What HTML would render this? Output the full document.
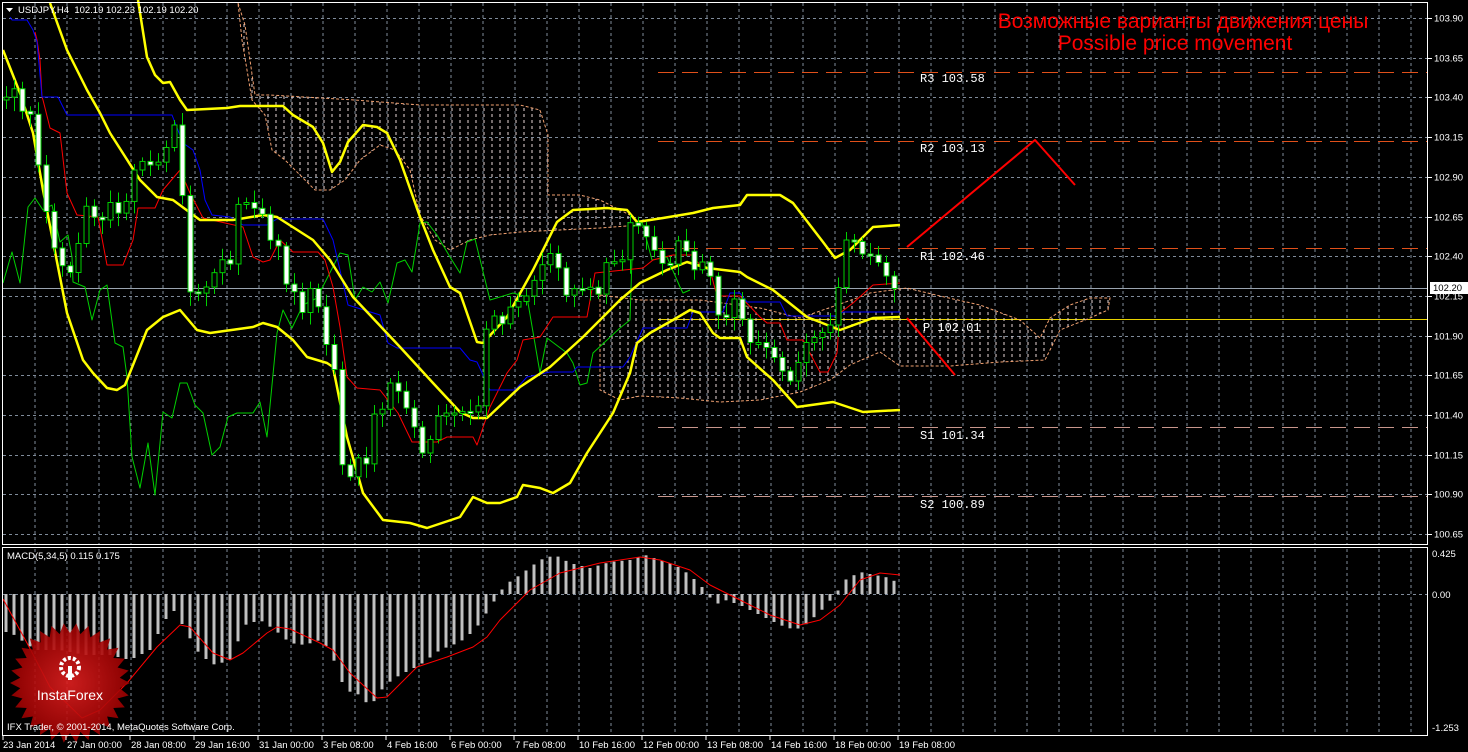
<!DOCTYPE html>
<html><head><meta charset="utf-8"><style>
html,body{margin:0;padding:0;background:#000;}
#c{position:relative;width:1468px;height:752px;overflow:hidden;background:#000;font-family:"Liberation Sans",sans-serif;}
svg{position:absolute;left:0;top:0;}
.ax{font-family:"Liberation Sans",sans-serif;font-size:9.5px;fill:#fff;}
.lv{font-family:"Liberation Mono",monospace;font-size:12px;fill:#fff;}
</style></head><body><div id="c">
<svg id="s" width="1468" height="752" xmlns="http://www.w3.org/2000/svg">
<g id="grid"></g>
<g id="cloud"></g>
<g id="lines"></g>
<g id="candles"></g>
<g id="macd"></g>
<g id="logo"></g>
<g id="txt">
<rect x="2.5" y="2.5" width="1425" height="542" fill="none" stroke="#fff"/>
<rect x="2.5" y="547.5" width="1425" height="188" fill="none" stroke="#fff"/>
<path d="M6 8 L13 8 L9.5 12 Z" fill="#fff"/>
<text x="18" y="13" class="ax" xml:space="preserve">USDJPY,H4  102.19 102.23 102.19 102.20</text>
<text x="7" y="559" class="ax">MACD(5,34,5) 0.115 0.175</text>
<text x="7" y="730" class="ax">IFX Trader, © 2001-2014, MetaQuotes Software Corp.</text>
<text x="1183" y="28" text-anchor="middle" font-family="Liberation Sans, sans-serif" font-size="21" fill="#ff0000">Возможные варианты движения цены</text>
<text x="1175" y="50" text-anchor="middle" font-family="Liberation Sans, sans-serif" font-size="21" fill="#ff0000">Possible price movement</text>
<text x="920" y="82" class="lv">R3 103.58</text>
<text x="920" y="152" class="lv">R2 103.13</text>
<text x="920" y="260" class="lv">R1 102.46</text>
<text x="923" y="331" class="lv">P 102.01</text>
<text x="920" y="439" class="lv">S1 101.34</text>
<text x="920" y="508" class="lv">S2 100.89</text>
</g>
<g id="axis"></g>
</svg>
</div>
<script>
const NS="http://www.w3.org/2000/svg";
function el(g,tag,a,txt){const e=document.createElementNS(NS,tag);for(const k in a)e.setAttribute(k,a[k]);if(txt!==undefined)e.textContent=txt;document.getElementById(g).appendChild(e);return e;}
function pl(g,pts,col,w,extra){const a={points:pts.map(p=>p.join(',')).join(' '),fill:'none',stroke:col,'stroke-width':w,'stroke-linejoin':'round'};Object.assign(a,extra||{});return el(g,'polyline',a);}
function interp(pts,x){if(x<=pts[0][0])return pts[0][1];for(let i=1;i<pts.length;i++){if(x<=pts[i][0]){const a=pts[i-1],b=pts[i];return a[1]+(b[1]-a[1])*(x-a[0])/(b[0]-a[0]);}}return pts[pts.length-1][1];}
for(let x=35;x<1428;x+=32){el('grid','line',{x1:x,y1:3,x2:x,y2:545,stroke:'#7f8b9a','stroke-dasharray':'3,3','stroke-width':1});el('grid','line',{x1:x,y1:549,x2:x,y2:735,stroke:'#7f8b9a','stroke-dasharray':'3,3','stroke-width':1});}
const prices=["103.90","103.65","103.40","103.15","102.90","102.65","102.40","102.15","101.90","101.65","101.40","101.15","100.90","100.65"];
prices.forEach((p,i)=>{const y=Math.round(18+i*39.7)+.5;el('grid','line',{x1:3,y1:y,x2:1428,y2:y,stroke:'#7f8b9a','stroke-dasharray':'3,3'});el('axis','line',{x1:1428,y1:y,x2:1432,y2:y,stroke:'#fff'});el('axis','text',{x:1434,y:y+3,class:'ax'},p);});
el('grid','line',{x1:3,y1:594.5,x2:1428,y2:594.5,stroke:'#7f8b9a','stroke-dasharray':'3,3'});
[[553,"0.425"],[594,"0.00"],[727,"-1.253"]].forEach(a=>{el('axis','text',{x:1432,y:a[0]+4,class:'ax'},a[1]);});
const lv=[[72,'#e0501a'],[141,'#e0501a'],[248,'#e0501a'],[427,'#c8968c'],[496,'#c8968c']];
lv.forEach(a=>el('grid','line',{x1:658,y1:a[0]+.5,x2:1428,y2:a[0]+.5,stroke:a[1],'stroke-dasharray':'16,8'}));
el('grid','line',{x1:3,y1:288.5,x2:1428,y2:288.5,stroke:'#9aa4b0'});
el('grid','line',{x1:658,y1:319.5,x2:1428,y2:319.5,stroke:'#e8d200'});
el('axis','rect',{x:1430,y:282,width:38,height:12,fill:'#fff'});
el('axis','text',{x:1433,y:291,class:'ax',style:'fill:#000'},'102.20');
const tl=["23 Jan 2014","27 Jan 00:00","28 Jan 08:00","29 Jan 16:00","31 Jan 00:00","3 Feb 08:00","4 Feb 16:00","6 Feb 00:00","7 Feb 08:00","10 Feb 16:00","12 Feb 00:00","13 Feb 08:00","14 Feb 16:00","18 Feb 00:00","19 Feb 08:00"];
tl.forEach((t,i)=>{const x=i==0?3:2+i*64;el('axis','line',{x1:x,y1:736,x2:x,y2:740,stroke:'#fff'});el('axis','text',{x:x+(i?1:0),y:748,class:'ax'},t);});
const defs=el('grid','defs',{});
const pat=document.createElementNS(NS,'pattern');pat.setAttribute('id','vp');pat.setAttribute('width','8');pat.setAttribute('height','6');pat.setAttribute('patternUnits','userSpaceOnUse');
const pl2=document.createElementNS(NS,'line');pl2.setAttribute('x1','4');pl2.setAttribute('x2','4');pl2.setAttribute('y1','0');pl2.setAttribute('y2','3');pl2.setAttribute('stroke','#e8d6d6');pat.appendChild(pl2);defs.appendChild(pat);
const c1=[[238,3],[245,25],[255,95],[270,95],[355,100],[420,105],[520,105],[540,110],[548,135],[548,195],[580,195],[600,200],[630,215],[640,225],[600,228],[560,230],[520,232],[490,235],[470,240],[450,250],[435,240],[420,215],[410,170],[395,150],[380,145],[360,160],[345,180],[330,190],[315,190],[300,175],[285,160],[272,150],[265,115],[252,100],[242,40]];
el('cloud','polygon',{points:c1.map(p=>p.join(',')).join(' '),fill:'url(#vp)',stroke:'#f0a070','stroke-dasharray':'3,2','stroke-width':1});
const c2=[[600,295],[640,300],[700,300],[760,308],[800,318],[843,303],[870,293],[907,288],[940,296],[980,305],[1020,320],[1040,338],[1050,318],[1070,305],[1090,298],[1110,298],[1108,310],[1090,318],[1060,330],[1045,360],[1000,362],[950,366],[900,366],[880,352],[850,365],[830,380],[800,392],[760,400],[720,402],[680,398],[640,396],[620,400],[600,390]];
el('cloud','polygon',{points:c2.map(p=>p.join(',')).join(' '),fill:'url(#vp)',stroke:'#f0a070','stroke-dasharray':'3,2','stroke-width':1});
const green=[[3,283],[12,252],[20,283],[28,207],[35,198],[43,210],[52,205],[60,242],[68,235],[72,257],[73,282],[85,287],[92,320],[100,290],[107,285],[115,343],[123,347],[127,377],[132,457],[140,488],[148,443],[155,495],[163,412],[172,418],[180,383],[187,383],[195,405],[203,413],[212,455],[220,447],[228,417],[237,413],[253,413],[260,402],[267,437],[277,333],[283,310],[292,328],[303,305],[317,298],[340,253],[348,255],[355,300],[363,287],[372,292],[380,282],[388,303],[397,263],[405,260],[412,272],[420,223],[427,222],[437,235],[450,257],[460,273],[467,242],[475,239],[490,300],[513,293],[527,297],[540,373],[547,338],[567,353],[573,363],[580,385],[587,383],[593,353],[620,328],[630,320],[633,227],[642,222],[652,260],[667,257],[680,287],[683,293],[690,290]];
pl('lines',green,'#00d000',1);
const red=[[35,32],[37,40],[40,60],[42,97],[43,100],[50,128],[60,133],[67,193],[77,215],[98,217],[107,265],[123,265],[133,240],[138,208],[155,208],[163,190],[180,170],[190,193],[203,218],[243,227],[253,257],[263,262],[270,260],[280,240],[293,252],[318,252],[325,260],[333,287],[340,327],[347,377],[357,388],[380,390],[398,413],[412,442],[437,442],[447,437],[473,437],[477,445],[490,407],[507,373],[517,360],[523,340],[540,337],[553,317],[587,317],[595,273],[643,268],[653,260],[673,255],[692,255],[700,265],[710,270],[717,296],[740,296],[760,317],[767,323],[780,323],[787,340],[803,340],[820,372],[828,372],[837,353],[840,313],[853,303],[873,285],[900,283]];
pl('lines',red,'#ff0000',1);
const blue=[[10,17],[12,20],[27,20],[33,30],[37,42],[42,97],[58,97],[67,115],[172,115],[183,143],[193,150],[200,170],[205,200],[212,215],[230,217],[243,225],[267,225],[277,219],[323,219],[333,240],[348,305],[380,315],[388,343],[397,348],[460,348],[470,360],[477,362],[490,390],[515,390],[527,377],[550,372],[573,372],[577,367],[623,367],[630,357],[643,328],[687,328],[693,312],[723,312],[730,293],[740,293],[747,302],[780,302],[787,316],[837,316],[843,312],[900,312]];
pl('lines',blue,'#0000ff',1);
const up=[[138,0],[147,57],[155,75],[163,83],[170,82],[180,100],[187,110],[227,108],[240,106],[283,106],[293,115],[313,127],[323,143],[332,172],[340,162],[348,142],[363,125],[377,127],[387,133],[400,160],[420,217],[433,250],[450,287],[460,293],[477,342],[483,343],[507,317],[533,270],[557,222],[573,210],[607,208],[627,210],[637,222],[663,218],[693,213],[713,208],[740,205],[747,195],[780,195],[793,203],[823,242],[835,258],[850,250],[873,227],[900,225]];
const mid=[[50,3],[67,50],[87,90],[100,113],[110,133],[140,180],[157,197],[173,200],[200,220],[233,220],[263,215],[277,217],[313,240],[330,260],[353,297],[400,347],[433,383],[460,412],[473,418],[487,418],[520,387],[550,367],[583,337],[620,300],[640,283],[667,270],[687,262],[707,268],[740,272],[747,277],[773,290],[807,317],[840,330],[873,318],[900,317]];
const lo=[[3,50],[20,93],[33,133],[43,190],[67,313],[83,360],[93,373],[107,388],[117,390],[125,385],[147,330],[163,317],[180,310],[197,330],[210,333],[253,327],[263,323],[277,327],[293,340],[307,357],[327,363],[333,367],[347,437],[363,493],[383,520],[410,523],[427,528],[460,517],[473,497],[487,503],[500,503],[517,497],[523,485],[540,488],[553,493],[570,483],[587,453],[613,413],[630,373],[637,343],[650,333],[673,320],[690,310],[700,313],[713,333],[720,338],[740,338],[747,357],[773,380],[797,407],[833,402],[863,412],[900,410]];
[up,mid,lo].forEach(p=>pl('lines',p,'#ffff00',2.5));
const early=[[5,100],[12,80],[20,115],[28,100],[35,150],[43,190],[50,240],[60,260],[67,280],[75,260],[85,205],[93,215],[100,230],[107,195],[115,215],[123,210],[130,190],[138,150],[145,170],[155,160],[162,165],[170,130],[178,120],[187,290],[195,295],[203,290],[210,283]];
const late=[[690,275],[700,262],[707,262],[715,300],[722,335],[730,300],[738,298],[746,340],[754,345],[762,340],[770,355],[778,360],[786,382],[794,380],[802,345],[810,340],[818,335],[826,330],[834,320],[842,255],[850,225],[858,258],[866,250],[874,260],[882,265],[890,287],[898,290]];
function closeAt(x){if(x<=210)return interp(early,x);if(x<=690)return interp(green,x-208);return interp(late,x);}
let prev=closeAt(2);let k=0;
for(let x=6;x<=898;x+=8){k++;const c=closeAt(x);const o=prev;prev=c;const top=Math.min(o,c),bot=Math.max(o,c);const h=Math.max(bot-top,2);
const w1=top-4-((k*7)%9),w2=bot+4+((k*5)%11);
el('candles','line',{x1:x+.5,y1:w1,x2:x+.5,y2:w2,stroke:'#00d000'});
el('candles','rect',{x:x-2,y:top,width:5,height:h,fill:c>o?'#fff':'#000',stroke:'#00d000'});}
const mb=[[10,632],[35,650],[60,650],[85,655],[110,655],[130,660],[150,650],[165,620],[175,610],[185,630],[200,655],[215,665],[230,660],[245,625],[260,620],[275,630],[290,643],[305,645],[320,640],[330,650],[345,690],[360,695],[370,707],[385,685],[400,675],[420,665],[440,650],[460,642],[475,630],[485,615],[495,600],[505,585],[520,575],[540,560],[555,555],[570,563],[590,568],[610,562],[630,560],[645,555],[660,560],[675,565],[690,575],[705,590],[715,605],[725,600],[740,605],[760,615],[780,625],[795,630],[805,625],[820,612],[835,595],[845,580],[860,572],[875,575],[890,578],[900,585]];
for(let x=6;x<=898;x+=8){const v=interp(mb,x);el('macd','rect',{x:x-1.5,y:Math.min(v,594),width:3,height:Math.max(Math.abs(v-594),1),fill:'#c0c0c0'});}
pl('macd',[[3,599],[27,643],[50,687],[82,718],[100,710],[127,683],[157,647],[180,625],[190,627],[213,653],[230,660],[243,653],[267,633],[277,627],[290,629],[320,643],[333,650],[350,673],[377,698],[387,697],[417,667],[447,657],[473,647],[487,637],[500,620],[530,590],[560,573],[600,563],[640,557],[660,560],[690,570],[710,585],[740,600],[770,615],[800,625],[820,620],[840,605],[860,580],[880,573],[900,575]],'#ff0000',1);
pl('lines',[[907,247],[1035,140],[1075,185]],'#ff0000',2);
pl('lines',[[907,318],[955,375]],'#ff0000',2);
let sp=[];const cx=70,cy=683;for(let i=0;i<60;i++){const r=i%2?50:60;const a=i*Math.PI/30;sp.push([cx+r*Math.cos(a),cy+r*Math.sin(a)]);}
const gd=document.createElementNS(NS,'radialGradient');gd.setAttribute('id','rg');[['0','#e02020'],['1','#9a0000']].forEach(s=>{const st=document.createElementNS(NS,'stop');st.setAttribute('offset',s[0]);st.setAttribute('stop-color',s[1]);gd.appendChild(st);});defs.appendChild(gd);
el('logo','polygon',{points:sp.map(p=>p.join(',')).join(' '),fill:'url(#rg)',opacity:'0.9'});
el('logo','circle',{cx:70,cy:667,r:9,fill:'none',stroke:'#fff','stroke-width':4,'stroke-dasharray':'3,2'});
el('logo','rect',{x:68,y:666,width:4,height:14,fill:'#fff'});
el('logo','text',{x:70,y:700,'text-anchor':'middle','font-family':'Liberation Sans, sans-serif','font-size':'14',fill:'#fff'},'InstaForex');
</script>
</body></html>
